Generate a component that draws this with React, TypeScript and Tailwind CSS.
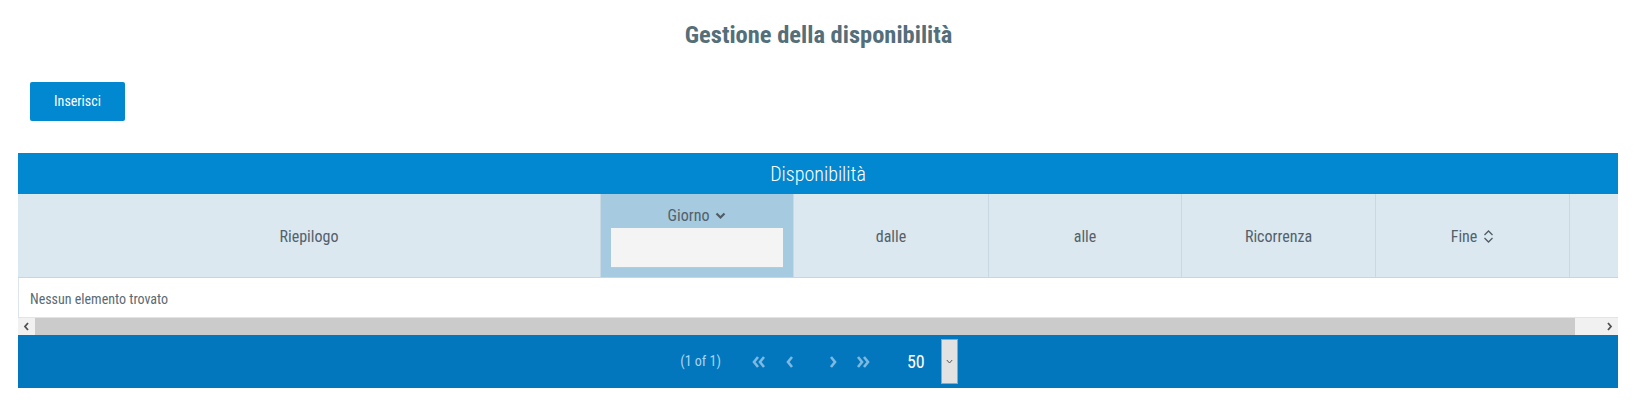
import React from "react";

const FONT = "font-[family-name:'Roboto_Condensed','Liberation_Sans_Narrow','DejaVu_Sans_Condensed',Roboto,sans-serif]";

function ChevronDown() {
  return (
    <svg width="11" height="8" viewBox="0 0 11 8" className="inline-block">
      <polyline points="1.5,1.5 5.5,5.5 9.5,1.5" fill="none" stroke="#4f5d66" strokeWidth="2.2" />
    </svg>
  );
}

function SortIcon() {
  return (
    <svg width="11" height="15" viewBox="0 0 11 15" className="inline-block">
      <polyline points="1.5,6 5.5,2 9.5,6" fill="none" stroke="#4f5d66" strokeWidth="1.3" />
      <polyline points="1.5,9 5.5,13 9.5,9" fill="none" stroke="#4f5d66" strokeWidth="1.3" />
    </svg>
  );
}

function Chev({ dir, double }: { dir: "l" | "r"; double?: boolean }) {
  const c = "#7db9e0";
  const one = (dx: number) =>
    dir === "l" ? (
      <polyline key={dx} points={`${6 + dx},2 ${2 + dx},7 ${6 + dx},12`} fill="none" stroke={c} strokeWidth="2.6" />
    ) : (
      <polyline key={dx} points={`${2 + dx},2 ${6 + dx},7 ${2 + dx},12`} fill="none" stroke={c} strokeWidth="2.6" />
    );
  return (
    <svg width={double ? 15 : 9} height="14" viewBox={`0 0 ${double ? 15 : 9} 14`}>
      {double ? [one(0), one(6)] : one(0)}
    </svg>
  );
}

const cols = [
  { label: "Riepilogo", w: "w-[582px]" },
  { label: "Giorno", w: "w-[193px]" },
  { label: "dalle", w: "w-[195px]" },
  { label: "alle", w: "w-[193px]" },
  { label: "Ricorrenza", w: "w-[194px]" },
  { label: "Fine", w: "w-[194px]" },
  { label: "", w: "w-[76px]" },
];

export default function App() {
  return (
    <div className={`w-[1637px] h-[409px] bg-white ${FONT} overflow-hidden`}>
      <div className="pt-[21px] h-[50px] text-center">
        <h1 className="text-[24.5px] leading-[28px] font-bold text-[#546e7a]">Gestione della disponibilità</h1>
      </div>
      <div className="mt-[32px] pl-[30px]">
        <button className="w-[95px] h-[39px] bg-[#0288d1] rounded-[2px] text-white text-[14px] leading-[39px]">
          Inserisci
        </button>
      </div>
      <div className="mt-[32px] mx-[18px] w-[1600px]">
        <div className="h-[41px] bg-[#0288d1] text-white text-[20px] font-light flex items-center justify-center">
          Disponibilità
        </div>
        <div className="overflow-hidden">
          <div className="flex w-[1627px] h-[84px] bg-[#dbe8f0] border-b border-[#c5d7e2]">
            {cols.map((c, i) => (
              <div
                key={i}
                className={`${c.w} shrink-0 h-full ${i > 0 ? "border-l border-[#c9d9e3]" : ""} ${
                  i === 1 ? "bg-[#a6cadf]" : ""
                } flex flex-col items-center justify-center text-[16px] text-[#53616a]`}
              >
                {i === 1 ? (
                  <div className="flex flex-col items-center w-full px-[10px] pt-[4px]">
                    <div className="flex items-center gap-[6px] leading-[18px]">
                      <span>Giorno</span>
                      <ChevronDown />
                    </div>
                    <div className="mt-[3px] w-full h-[40px] bg-[#f4f4f4] border-b border-[#c0c8cc]" />
                  </div>
                ) : i === 5 ? (
                  <div className="flex items-center gap-[6px] pt-[2px]">
                    <span>Fine</span>
                    <SortIcon />
                  </div>
                ) : (
                  <span className="pt-[2px]">{c.label}</span>
                )}
              </div>
            ))}
          </div>
          <div className="h-[40px] border-l border-b border-[#dbe5eb] flex items-center pl-[11px] pt-[3px] text-[14px] text-[#5a6a73]">
            Nessun elemento trovato
          </div>
        </div>
        <div className="h-[17px] flex bg-[#f1f1f1]">
          <div className="w-[17px] h-full flex items-center justify-center">
            <svg width="7" height="9" viewBox="0 0 7 9">
              <polyline points="5,1 2,4.5 5,8" fill="none" stroke="#505050" strokeWidth="1.8" />
            </svg>
          </div>
          <div className="w-[1540px] h-full bg-[#cbcbcb]" />
          <div className="flex-1" />
          <div className="w-[17px] h-full flex items-center justify-center">
            <svg width="7" height="9" viewBox="0 0 7 9">
              <polyline points="2,1 5,4.5 2,8" fill="none" stroke="#505050" strokeWidth="1.8" />
            </svg>
          </div>
        </div>
        <div className="h-[53px] bg-[#0277bd] flex items-center justify-center">
          <div className="flex items-center pl-[2px]">
            <span className="text-[14px] text-[#a9d5f3] mr-[31px]">(1 of 1)</span>
            <span className="mr-[19px]"><Chev dir="l" double /></span>
            <span className="mr-[34px]"><Chev dir="l" /></span>
            <span className="mr-[18px]"><Chev dir="r" /></span>
            <span className="mr-[36px]"><Chev dir="r" double /></span>
            <span className="text-[18px] text-white mr-[16px]">50</span>
            <div className="w-[17px] h-[45px] bg-[#e2e2e2] border border-[#a3a3a3] flex items-center justify-center">
              <svg width="7" height="5" viewBox="0 0 7 5">
                <polyline points="0.8,1 3.5,4 6.2,1" fill="none" stroke="#555" strokeWidth="1" />
              </svg>
            </div>
          </div>
        </div>
      </div>
    </div>
  );
}
